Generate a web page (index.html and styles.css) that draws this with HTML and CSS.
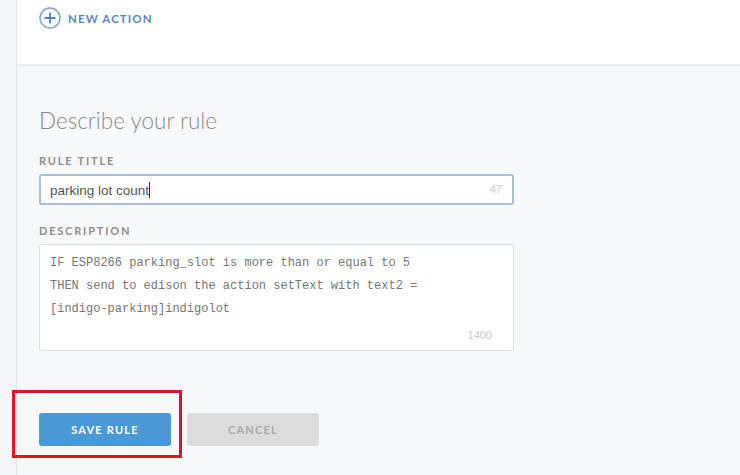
FILE: index.html
```html
<!DOCTYPE html>
<html lang="en">
<head>
  <meta charset="UTF-8">
  <title>Rule editor</title>
  <link rel="stylesheet" href="styles.css">
</head>
<body>
  <div class="rail"></div>
  <div class="main">
    <div class="actions">
      <button class="new-action">
        <svg width="22" height="22" viewBox="0 0 22 22"><circle cx="11" cy="11" r="10" fill="none" stroke="#7fa3d3" stroke-width="1.5"/><path d="M11 5.5v11M5.5 11h11" stroke="#4f82c4" stroke-width="1.8"/></svg>
        NEW ACTION
      </button>
    </div>

    <div class="describe">
      <h2>Describe your rule</h2>
      <label class="field-label">RULE TITLE</label>
      <div class="input-box focus">
        <span class="input-text">parking lot count<span class="caret"></span></span>
        <span class="count">47</span>
      </div>
      <label class="field-label">DESCRIPTION</label>
      <div class="input-box area">
        <div class="code">IF ESP8266 parking_slot is more than or equal to 5
THEN send to edison the action setText with text2 =
[indigo-parking]indigolot</div>
        <span class="count">1400</span>
      </div>
      <div class="buttons">
        <button class="btn save">SAVE RULE<span class="mark"></span></button>
        <button class="btn cancel">CANCEL</button>
      </div>
    </div>
  </div>
</body>
</html>
```

FILE: styles.css
```css
body {
  margin: 0;
  display: flex;
  min-height: 475px;
  font-family: Lato, "Liberation Sans", sans-serif;
  background: #f7f8fa;
}
.rail {
  width: 16px;
  background: #f5f6f8;
  border-right: 1px solid #e2e5e9;
}
.main {
  flex: 1;
}
.actions {
  height: 66px;
  background: #fff;
  border-bottom: 2px solid #e8ebef;
  padding: 7px 0 0 22px;
  box-sizing: border-box;
}
.new-action {
  display: flex;
  align-items: center;
  gap: 7px;
  border: 0;
  background: none;
  padding: 0;
  font-family: Lato, sans-serif;
  font-size: 11.5px;
  font-weight: 700;
  letter-spacing: 1.1px;
  color: #5b87c2;
}
.describe {
  padding: 41px 0 0 22px;
  width: 475px;
}
h2 {
  margin: 0 0 20px;
  font-size: 22.5px;
  font-weight: 300;
  color: #8b8b8b;
}
.field-label {
  display: block;
  font-size: 11px;
  font-weight: 700;
  letter-spacing: 1.8px;
  color: #8e8e8e;
  margin-bottom: 7px;
}
.input-box {
  position: relative;
  background: #fff;
  border: 1px solid #dcdfe3;
  border-radius: 3px;
  box-sizing: border-box;
  margin-bottom: 18px;
}
.input-box.focus {
  height: 31px;
  border: 2px solid #a8bde0;
  display: flex;
  align-items: center;
  padding-left: 9px;
  margin-bottom: 19px;
}
.input-text {
  font-family: "Liberation Sans", Arial, sans-serif;
  font-size: 13.5px;
  color: #555;
}
.caret {
  display: inline-block;
  width: 1px;
  height: 16px;
  background: #333;
  vertical-align: -3px;
}
.count {
  position: absolute;
  right: 10px;
  font-family: "Liberation Sans", Arial, sans-serif;
  font-size: 11px;
  color: #c8c8c8;
}
.focus .count {
  top: 7px;
}
.area {
  height: 107px;
  padding: 7px 10px;
}
.area .count {
  bottom: 9px;
  right: 21px;
}
.code {
  white-space: pre;
  font-family: "Liberation Mono", "DejaVu Sans Mono", monospace;
  font-size: 12px;
  line-height: 23px;
  color: #767676;
}
.buttons {
  display: flex;
  gap: 16px;
  margin-top: 62px;
}
.btn {
  width: 132px;
  height: 33px;
  border: 0;
  border-radius: 3px;
  font-family: Lato, sans-serif;
  font-size: 11px;
  font-weight: 700;
  letter-spacing: 1.2px;
}
.save {
  position: relative;
  background: #4a98d6;
  color: #fff;
}
.cancel {
  background: #dcdcdc;
  color: #a9a9a9;
}
.mark {
  position: absolute;
  left: -27px;
  top: -23px;
  right: -11px;
  bottom: -12px;
  border: 3px solid #dd1720;
}
```
